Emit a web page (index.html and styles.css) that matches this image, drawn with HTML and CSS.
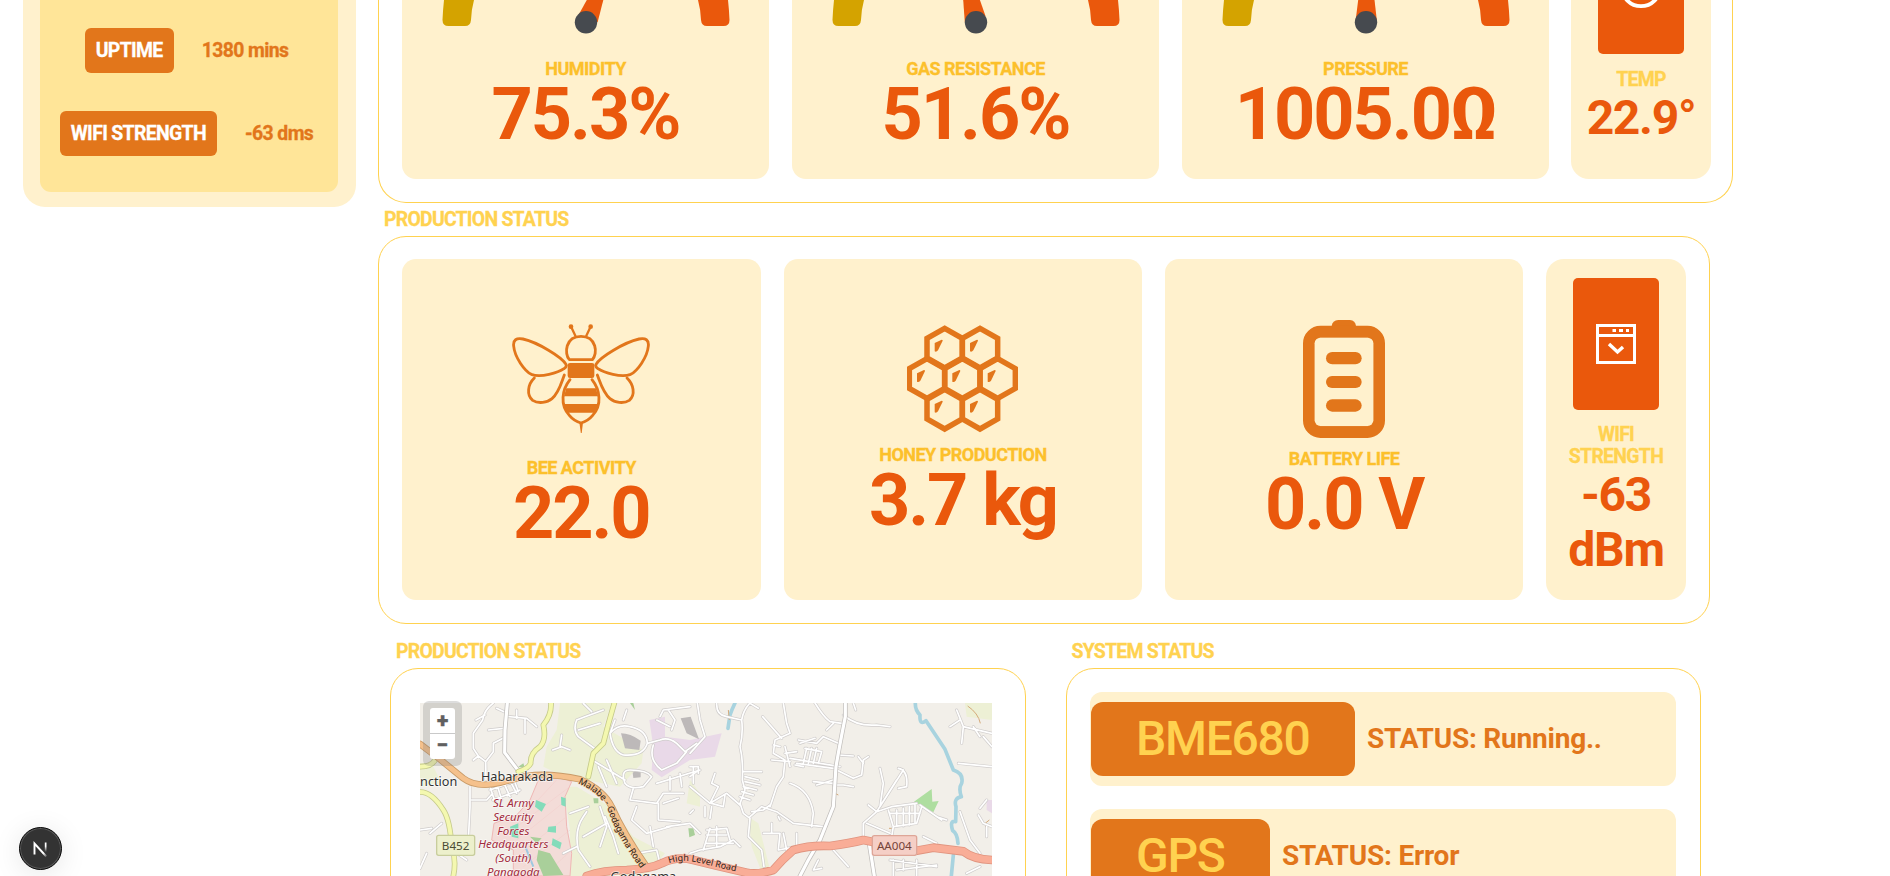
FILE: index.html
```html
<!DOCTYPE html>
<html lang="en">
<head>
<meta charset="utf-8">
<title>Hive Dashboard</title>
<link rel="stylesheet" href="styles.css">
</head>
<body>
<div class="page">
  <aside class="sidebar">
    <div class="sidebar-inner">
      <div class="stat"><span class="tag">UPTIME</span><span class="stat-value">1380 mins</span></div>
      <div class="stat"><span class="tag">WIFI STRENGTH</span><span class="stat-value">-63 dms</span></div>
    </div>
  </aside>

  <main class="content">
    <section class="panel panel-top">
      <div class="card gauge-card">
        <svg class="gauge" width="320" height="40" viewBox="-160 0 320 40">
          <path class="g-low" d="M-142 0Q-143 9-143.500 20Q-143.500 26-137.500 26H-121Q-115.500 26-115 20Q-114.500 9-112 0Z"/>
          <path class="g-high" d="M142 0Q143 9 143.500 20Q143.500 26 137.500 26H121Q115.500 26 115 20Q114.500 9 112 0Z"/>
          <path class="g-high" d="M.8 0H17.300L11.700 22H0L-7.500 15Z"/>
          <circle class="g-hub" cx="0" cy="22.300" r="11.200"/>
        </svg>
        <div class="label">HUMIDITY</div><div class="value">75.3%</div>
      </div>
      <div class="card gauge-card">
        <svg class="gauge" width="320" height="40" viewBox="-160 0 320 40">
          <path class="g-low" d="M-142 0Q-143 9-143.500 20Q-143.500 26-137.500 26H-121Q-115.500 26-115 20Q-114.500 9-112 0Z"/>
          <path class="g-high" d="M142 0Q143 9 143.500 20Q143.500 26 137.500 26H121Q115.500 26 115 20Q114.500 9 112 0Z"/>
          <path class="g-high" d="M-12.800 0H3.900L9.500 16L0 22H-11.200Z"/>
          <circle class="g-hub" cx="0" cy="22.300" r="11.200"/>
        </svg>
        <div class="label">GAS RESISTANCE</div><div class="value">51.6%</div>
      </div>
      <div class="card gauge-card">
        <svg class="gauge" width="320" height="40" viewBox="-160 0 320 40">
          <path class="g-low" d="M-142 0Q-143 9-143.500 20Q-143.500 26-137.500 26H-121Q-115.500 26-115 20Q-114.500 9-112 0Z"/>
          <path class="g-high" d="M142 0Q143 9 143.500 20Q143.500 26 137.500 26H121Q115.500 26 115 20Q114.500 9 112 0Z"/>
          <path class="g-high" d="M-7.800 0H8.500L10.800 20H-10.300Z"/>
          <circle class="g-hub" cx="0" cy="22.300" r="11.200"/>
        </svg>
        <div class="label">PRESSURE</div><div class="value">1005.0Ω</div>
      </div>
      <div class="card side-card side-top">
        <div class="icon-box icon-box-top">
          <svg width="86" height="20" viewBox="0 0 86 20"><circle cx="43" cy="-13" r="19.200" fill="none" stroke="#fff" stroke-width="3.800"/></svg>
        </div>
        <div class="side-label">TEMP</div><div class="side-value">22.9°</div>
      </div>
    </section>

    <h2 class="title">PRODUCTION STATUS</h2>
    <section class="panel panel-mid">
      <div class="card bee">
        <svg width="138" height="111" viewBox="98 70 414 333" fill="none" stroke="#e2761b" stroke-width="8.500" stroke-linecap="round">
          <circle cx="275" cy="81" r="7" fill="#e2761b" stroke="none"/><circle cx="334" cy="81" r="7" fill="#e2761b" stroke="none"/>
          <path d="M276 83L288 108M333 83L321 108" stroke-width="7"/>
          <path d="M270 180C254 162 258 110 305 110S356 162 339 180Z" stroke-linejoin="round"/>
          <rect x="265" y="190" width="80" height="45" rx="7" fill="#e2761b" stroke="none"/>
          <path d="M260 194C248 172 175 128 131 118C111 114 101 121 103 139C106 173 136 214 156 224C184 235 237 219 254 207Q263 202 260 194Z"/>
          <path d="M350 194C362 172 435 128 479 118C499 114 509 121 507 139C504 173 474 214 454 224C426 235 373 219 356 207Q347 202 350 194Z"/>
          <path d="M165 235C145 254 141 286 160 302C177 313 204 309 218 297C239 279 245 252 255 226M443 235C463 254 469 286 450 302C433 313 406 309 392 297C371 279 364 252 354 226"/>
          <path d="M272 240C248 270 241 315 270 347C279 358 291 366 305 370C319 366 331 358 340 347C369 315 362 270 338 240"/>
          <path d="M261 266H350L356 290H254ZM254 313H356L346 339H264Z" fill="#e2761b" stroke="none"/>
          <path d="M300 368L304.500 400H307L311 368Z" fill="#e2761b" stroke="none"/>
        </svg>
        <div class="label">BEE ACTIVITY</div><div class="value">22.0</div>
      </div>
      <div class="card honey">
        <svg width="111" height="109" viewBox="141 75 333 327">
          <defs>
            <g id="cell"><path d="M0-53L53-23V36L0 66L-53 36V-23Z" fill="none" stroke="#e2761b" stroke-width="16.500"/><path d="M-30-9L-9-19Q-6-19-6-16L-20 13Q-25 19-30 16Z" fill="#e2761b"/></g>
          </defs>
          <use href="#cell" x="254" y="138"/><use href="#cell" x="360" y="138"/>
          <use href="#cell" x="201" y="229"/><use href="#cell" x="307" y="229"/><use href="#cell" x="413" y="229"/>
          <use href="#cell" x="254" y="321"/><use href="#cell" x="360" y="321"/>
        </svg>
        <div class="label">HONEY PRODUCTION</div><div class="value">3.7 kg</div>
      </div>
      <div class="card battery">
        <svg width="82" height="118" viewBox="189 60 246 354" fill="#e2761b">
          <path d="M275 80V78Q277 62 295 60H330Q346 62 348 78V80Z"/>
          <rect x="206.500" y="95" width="211" height="301.500" rx="35" fill="none" stroke="#e2761b" stroke-width="35"/>
          <path d="M223 112H401V380H223Z"/><rect x="224" y="113" width="176" height="265" rx="17" fill="#fff1cd"/>
          <rect x="258" y="156" width="107" height="37" rx="18.500"/><rect x="258" y="228" width="107" height="36" rx="18"/><rect x="258" y="298" width="107" height="37" rx="18.500"/>
        </svg>
        <div class="label">BATTERY LIFE</div><div class="value">0.0 V</div>
      </div>
      <div class="card side-card side-mid">
        <div class="icon-box">
          <svg width="40" height="40" viewBox="0 0 40 40"><path d="M1.500 1.500H38.500V38.500H1.500ZM1.500 11.500H38.500" fill="none" stroke="#fff" stroke-width="3"/><path d="M16.500 5H20V8H16.500ZM23 5H27V8H23ZM30 5H33V8H30Z" fill="#fff"/><path d="M13 20L21.500 28L27 23" fill="none" stroke="#fff" stroke-width="3.400"/></svg>
        </div>
        <div class="side-label">WIFI STRENGTH</div><div class="side-value">-63 dBm</div>
      </div>
    </section>

    <div class="bottom">
      <div class="col">
        <h2 class="title">PRODUCTION STATUS</h2>
        <section class="panel panel-map">
          <div class="map">
            <svg class="map-svg" width="572" height="173" viewBox="150 249 1716 519">
              <defs>
                <g id="minor">
                  <path d="M370 249Q342 270 338 300L310 340V385L325 408L347 425L348 480M325 408L310 420M347 425L370 395V370L402 353M318 300L345 285M355 330L402 325M380 265L402 275M410 289L470 295L500 320M440 270V295M465 295V340M300 500V560L295 660M305 540H350L368 520M360 500L375 545M380 490L395 540M400 485L420 530M418 478L440 520M360 510L430 485M368 540L450 510M432 480L445 515"/>
                  <path d="M548 390L575 380L600 390M570 380L575 345M620 300L645 290L700 270M620 300Q608 330 625 350L680 390M625 330L690 310M640 250L665 275M735 300L720 340M720 340Q745 310 780 320Q830 330 832 370Q820 410 760 405Q728 395 720 340M832 370L870 360Q895 350 920 370L945 395L980 370M850 375Q835 420 875 450L920 430L950 395M780 450Q750 450 765 490Q780 510 820 500L845 470Q830 450 780 450M675 425L765 480M685 440L710 500M710 420L740 490M790 505L780 540L860 550L880 520H940M865 550V600L930 605M880 550L925 535M800 560L785 600L830 640L900 620M640 590Q612 630 625 690L660 740M640 590L650 575M690 560L710 620L690 680M705 590L730 650L745 700M710 610L640 650M860 490L990 450M900 470V510M930 460L935 500M970 440V490M870 290L880 270L960 260M895 270L915 300L905 330M860 300L900 320M800 700L860 690L870 730M840 620L850 680M890 620L960 610L990 640M180 640L215 610M150 630L185 625M170 700L150 745M260 700L290 720M600 580L655 560M580 700L620 680M770 270L760 300"/>
                  <g transform="translate(960 0)">
                    <path d="M22 249L30 300L45 350L0 400M80 249Q78 285 110 290L155 300M155 300Q160 270 180 249M155 300Q160 340 150 380Q160 420 157 480L165 510L150 550L160 580L180 595L175 650L215 690L222 740M180 250L205 265M280 249L290 310L300 340L255 360L250 400L285 420L280 470L260 500L240 560M218 290L275 355M285 380L300 440M270 380L250 375M245 420L300 425M285 400L320 395M375 249Q400 290 420 305L455 310M430 310L410 330M325 360L380 370L400 350L445 370M330 370L375 355M350 385L340 430M365 385L355 430M380 385L370 430M395 395L385 430M345 385L395 395M320 430L430 445M315 435L340 440M300 415L450 440M370 485L430 490M380 495L430 480M440 450L490 475L515 465L520 420L535 410M505 410L520 430M445 405L490 408M460 285Q500 320 560 315L600 320M490 249L497 270M430 495H460L490 500M300 490Q360 510 370 580L365 620M160 455H215M165 470L205 480M165 485L210 495M160 500L200 510M155 515L190 525M150 530L180 540M180 590L215 560L260 575L310 610L400 620M185 575L220 570L240 555M265 590L270 600M0 440H25V460M0 470L20 455M0 500L60 550L110 520L150 555M75 460L65 490L85 500L60 550M65 550L100 560L105 525M45 560V590M65 560L60 595M10 570L0 580M50 630L110 625L120 660M50 645L110 645M60 625L40 690M80 620V680M30 690L90 680L130 660L150 680M0 700L30 690M50 670H130M220 640H270L265 690M245 610V640M265 690L320 680V640M280 640L290 690M570 445L580 490L570 560M625 445Q655 450 650 500L625 505M570 560L640 450M560 575L620 480M535 555L560 575L520 610V650M560 575L605 560L680 550M530 610L600 640M595 570L610 620L680 610L695 560M600 580H690M620 570V615M640 565V618M658 560V615M675 555V610M690 555L755 600M740 590L770 600M610 620L600 680M800 270L820 320L815 370M820 320L906 340M810 300L780 320M850 320L870 350M880 350L906 380M805 430L906 440M810 575L840 660L870 700M870 565L890 540M865 585L880 610L906 620M890 620V650M600 720L740 740M620 750L740 735M610 720V768M680 720V768M640 720V750M700 650L740 670M430 690L475 740M385 720L370 750L395 745M830 760L870 740"/>
                  </g>
                </g>
                <g id="mid">
                  <path d="M412 249L405 330L404 398L445 452"/>
                  <path d="M1426 249V290Q1408 380 1398 440L1390 560L1350 660L1315 720L1290 768M1496 660L1513 768"/>
                </g>
                <g id="yellow"><path d="M543 249Q545 285 520 315Q530 360 510 380Q480 400 482 430Q475 445 445 455M733 249Q715 310 700 370L670 400L655 470M150 516Q185 515 220 570Q240 600 245 680Q260 720 250 768M150 440Q185 440 195 420"/></g>
                <path id="orange" d="M150 372L200 410L280 475Q320 505 390 488L470 468Q540 458 630 478Q700 510 725 560Q760 640 830 740"/>
                <path id="red" d="M650 768Q700 750 770 750Q840 748 880 728Q920 708 970 720Q1050 740 1130 758Q1160 765 1210 750Q1235 720 1270 690Q1320 675 1380 678Q1440 670 1480 660L1640 692L1690 683L1780 694Q1810 718 1866 720"/>
                <path id="text-malabe" d="M624 490Q695 520 716 575Q740 650 830 770"/>
                <path id="text-high" d="M897 730Q940 715 1000 731T1120 758"/>
              </defs>
              <path fill="#f2efe9" d="M150 249H1866V768H150Z"/>
              <path fill="#edf0d5" d="M570 249H725L700 320L820 390L815 430L750 500L650 480L600 478L520 440L530 380L560 330ZM620 500L720 560L790 650L885 700L830 768H600V630L580 500ZM150 430H185L215 490L150 500ZM960 480L990 520V560L950 550ZM1135 590L1165 610L1205 768H1180L1145 680ZM1785 249H1866V300L1790 290Z"/>
              <path fill="#f3dcd8" stroke="#efb7b5" stroke-width="3" d="M505 480Q570 465 605 485L585 530L590 620L605 700L600 768H430V690L365 660L372 610L440 585L480 540Z"/>
              <path stroke="#f2cdca" stroke-width="1.500" d="M485 560L560 480M440 620L600 500M440 660L590 540M450 700L590 590M460 740L600 630M520 768L605 690"/>
              <path fill="#e9d9e8" d="M838 300L885 290V350L960 360L1055 340L1035 410L960 420L875 472L845 450L850 380ZM1850 540H1866V580L1850 570Z"/>
              <path fill="#bdb9b9" d="M753 340Q780 340 812 362L808 390L765 385ZM932 295L962 290L987 358L950 340ZM788 458L800 450L812 455V472L790 474Z"/>
              <path fill="#83dcba" d="M498 540L528 552L515 575L495 560ZM573 530L587 535V560L574 555ZM535 620L558 618V638L532 635ZM548 655L575 668L570 688L545 675ZM420 620L445 610V655L425 650Z"/>
              <path fill="#a9cf9a" d="M505 690L540 700L580 765L520 768L500 720ZM955 625H970L975 645L958 652ZM780 249L795 270L790 249ZM480 650L515 655L500 670ZM670 535H685V550H672ZM445 440L460 430L465 445Z"/>
              <path fill="#aedea0" d="M1632 545L1685 507L1687 545L1706 543L1690 577Z"/>
              <path class="river" d="M1636 249Q1635 270 1650 285Q1648 318 1668 302L1725 388L1750 450Q1782 460 1775 490Q1765 505 1774 530Q1750 535 1758 560L1757 605Q1738 600 1748 632Q1762 640 1764 670M1750 705L1744 768M1095 249Q1085 270 1080 285L1074 325"/>
              <path d="M466 680L490 740" stroke="#9ec8e0" stroke-width="6"/>
              <path d="M1793 258Q1825 280 1831 310M1843 612L1858 600M1845 620H1855M1557 625H1572M1395 520L1405 525M1075 270L1078 300" fill="none" stroke="#d5aa7a" stroke-width="3"/>
              <use href="#minor" class="minor-case"/><use href="#minor" class="minor-fill"/>
              <use href="#mid" class="mid-case"/><use href="#mid" class="mid-fill"/>
              <use href="#yellow" class="yellow-case"/><use href="#yellow" class="yellow-fill"/>
              <use href="#orange" class="orange-case"/><use href="#orange" class="orange-fill"/>
              <use href="#red" class="red-case"/><use href="#red" class="red-fill"/>
              <rect x="200" y="646" width="114" height="60" rx="6" fill="#edf0cc" stroke="#c8cd9c" stroke-width="4"/>
              <text class="ref" x="257" y="689">B452</text>
              <rect x="1507" y="647" width="133" height="59" rx="6" fill="#f5cfc6" stroke="#dea698" stroke-width="4"/>
              <text class="ref ref-red" x="1573" y="690">AA004</text>
              <text class="place" x="441" y="483">Habarakada</text>
              <text class="place" x="262" y="499" text-anchor="end">nction</text>
              <text class="place" x="820" y="783">Godagama</text>
              <g class="army"><text x="430" y="562">SL Army</text><text x="430" y="603">Security</text><text x="430" y="644">Forces</text><text x="430" y="685">Headquarters</text><text x="430" y="726">(South)</text><text x="430" y="767">Panagoda</text></g>
              <text class="road"><textPath href="#text-malabe" textLength="325">Malabe - Godagama Road</textPath></text>
              <text class="road road-high"><textPath href="#text-high" textLength="205">High Level Road</textPath></text>
            </svg>
            <div class="zoom"><div class="zoom-btns"><span>+</span><span>−</span></div></div>
          </div>
        </section>
      </div>
      <div class="col">
        <h2 class="title">SYSTEM STATUS</h2>
        <section class="panel panel-system">
          <div class="row"><span class="device">BME680</span><span class="status">STATUS: Running..</span></div>
          <div class="row"><span class="device">GPS</span><span class="status">STATUS: Error</span></div>
        </section>
      </div>
    </div>
  </main>

  <div class="badge">
    <svg width="16" height="18" viewBox="0 0 16 18"><defs><linearGradient id="fade" x1="0" y1="0" x2="0" y2="1"><stop offset=".4" stop-color="#fff"/><stop offset="1" stop-color="#fff" stop-opacity="0"/></linearGradient><linearGradient id="tail" x1="0" y1="0" x2="1" y2="1"><stop offset=".75" stop-color="#fff"/><stop offset="1" stop-color="#fff" stop-opacity=".2"/></linearGradient></defs><path d="M1.500 14.500V3.500L13.300 16.500" fill="none" stroke="url(#tail)" stroke-width="1.900"/><path d="M11.800 2.500H13.500V12H11.800Z" fill="url(#fade)"/></svg>
  </div>
</div>
</body>
</html>
```
FILE: styles.css
```css
* { box-sizing: border-box; }
body { margin: 0; background: #fff; font-family: Roboto, "Liberation Sans", sans-serif; font-weight: 700; overflow: hidden; }
svg { display: block; flex: none; }
.page { display: flex; align-items: flex-start; gap: 22px; height: 876px; padding-left: 23px; overflow: hidden; position: relative; }

.sidebar { width: 333px; height: 207px; padding: 0 18px 15px 17px; background: #fff1cd; border-radius: 0 0 22px 22px; flex: none; }
.sidebar-inner { height: 192px; padding-top: 28px; background: #ffe598; border-radius: 0 0 11px 11px; display: flex; flex-direction: column; gap: 38px; }
.stat { display: flex; justify-content: center; align-items: center; gap: 28px; font-size: 19.400px; color: #e2761b; padding-right: 5px; }
.stat + .stat .stat-value { padding-bottom: 1px; }
.tag { height: 45px; line-height: 46px; padding: 0 11px; border-radius: 6px; background: #e2761b; color: #fff; letter-spacing: -0.650px; }
.stat-value { letter-spacing: -0.600px; }
.tag, .stat-value, .title, .label, .side-label { -webkit-text-stroke: 0.3px currentColor; }

.content { width: 1355px; flex: none; }
.panel { border: 1px solid #ffd250; border-radius: 28px; display: flex; }
.panel-top { height: 203px; border-top: 0; border-radius: 0 0 28px 28px; padding: 0 20px 23px 23px; gap: 23px; }
.card { background: #fff1cd; border-radius: 14px; display: flex; flex-direction: column; align-items: center; text-align: center; }
.gauge-card { width: 367px; height: 179px; border-radius: 0 0 14px 14px; flex: none; }
.g-low { fill: #d4a300; } .g-high { fill: #ea580c; } .g-hub { fill: #464a4f; }
.gauge { margin-bottom: 19px; }
.label { font-size: 18px; line-height: 20px; letter-spacing: -0.520px; color: #fcc02b; white-space: nowrap; }
.value { font-size: 72px; line-height: 72px; letter-spacing: -2.050px; color: #ea580c; white-space: nowrap; }
.side-card { width: 140px; border-radius: 18px; flex: none; }
.side-top { height: 179px; border-radius: 0 0 18px 18px; margin-left: -1px; }
.icon-box { width: 86px; height: 132px; background: #ea580c; border-radius: 5px; display: flex; align-items: center; justify-content: center; }
.icon-box-top { height: 54px; border-radius: 0 0 5px 5px; align-items: flex-start; margin-bottom: 15px; }
.side-label { font-size: 19.400px; line-height: 22px; letter-spacing: -0.700px; color: #ffd250; }
.side-value { font-size: 48px; line-height: 55px; letter-spacing: -1.300px; color: #ea580c; margin-top: -1px; }
.side-top .side-value { line-height: 55px; }

.title { margin: 0; padding-left: 6px; font-size: 19.400px; line-height: 23px; height: 33px; padding-top: 5px; color: #ffd250; letter-spacing: -0.750px; font-weight: 700; }
.panel-mid { width: 1332px; height: 388px; padding: 22px 0 22px 23px; gap: 23px; }
.panel-mid .card { height: 341px; flex: none; }
.panel-mid .card:not(.side-card) { width: 358.500px; }
.bee { padding-top: 64px; } .bee svg { margin-bottom: 24px; }
.honey { padding-top: 66px; margin-left: 0.200px; } .honey svg { margin-bottom: 11px; }
.battery { padding-top: 61px; margin-left: -0.300px; } .battery svg { margin-bottom: 11px; }
.side-mid { padding: 19px 16px 0; margin-left: -0.400px; }
.side-mid .icon-box { margin-bottom: 14px; flex: none; }

.bottom { display: flex; gap: 39.500px; padding: 12px 0 0 12px; }
.col { width: 636px; flex: none; }
.col + .col { width: 635.500px; }
.bottom .title { height: 32px; padding-top: 4px; }
.panel-map { height: 500px; padding: 34px 0 0 29px; }
.map { position: relative; width: 572px; height: 440px; background: #f2efe9; }
.map-svg { font-family: "Noto Sans", sans-serif; font-weight: 400; letter-spacing: 0; }
.map-svg use, .river { fill: none; stroke-linejoin: round; stroke-linecap: round; }
.river { stroke: #a8d3df; stroke-width: 11px; }
.minor-case { stroke: #cfcccb; stroke-width: 9px; } .minor-fill { stroke: #fff; stroke-width: 5px; }
.mid-case { stroke: #c1bebb; stroke-width: 14px; } .mid-fill { stroke: #fff; stroke-width: 9.500px; }
.yellow-case { stroke: #c5ca8b; stroke-width: 17px; } .yellow-fill { stroke: #f4f8b0; stroke-width: 12px; }
.orange-case { stroke: #c99b68; stroke-width: 20px; } .orange-fill { stroke: #f5c18c; stroke-width: 15px; }
.red-case { stroke: #e0937e; stroke-width: 26px; } .red-fill { stroke: #f9ad97; stroke-width: 21px; }
.ref { font-size: 35px; text-anchor: middle; fill: #4c4d36; }
.ref-red { fill: #75443b; }
.place { font-size: 38px; text-anchor: middle; fill: #333; stroke: #fff; stroke-opacity: .65; stroke-width: 5px; paint-order: stroke; }
.place[text-anchor="end"] { text-anchor: end; }
.army { font-size: 34.500px; font-style: italic; text-anchor: middle; fill: #a22b3d; stroke: #fff; stroke-opacity: .6; stroke-width: 4px; paint-order: stroke; }
.road { font-size: 27px; fill: #292018; stroke: #f5c18c; stroke-width: 3px; paint-order: stroke; }
.road-high { stroke: #f9ad97; }
.zoom { position: absolute; left: 3px; top: -2px; width: 39px; height: 65px; padding: 7px; background: rgba(120,120,120,.25); border-radius: 6px; }
.zoom-btns { width: 25px; border-radius: 3px; overflow: hidden; background: #fff; color: #606060; }
.zoom-btns span { display: block; height: 25px; line-height: 24px; text-align: center; font-size: 21px; font-weight: 900; -webkit-text-stroke: .4px #606060; }
.zoom-btns span + span { border-top: 1px solid #c9c9c9; height: 26px; line-height: 23px; }

.panel-system { height: 500px; padding: 23px 24px 0 23px; flex-direction: column; gap: 23px; }
.row { height: 94px; background: #fff1cd; border-radius: 12px; display: flex; align-items: center; gap: 12px; padding-left: 1px; flex: none; }
.device { height: 74px; line-height: 74px; padding: 0 45.500px; background: #e2761b; border-radius: 12px; color: #ffd250; font-size: 48px; font-weight: 500; letter-spacing: -1.300px; }
.status { font-size: 28px; color: #e2761b; letter-spacing: -0.220px; font-weight: 700; padding-bottom: 2px; }

.badge { position: absolute; left: 19px; top: 827px; width: 43px; height: 43px; border-radius: 50%; background: #333; border: 1px solid #0a0a0a; box-shadow: inset 0 0 0 1px #5a5a5a, 0 4px 28px rgba(0,0,0,.1); display: flex; align-items: center; justify-content: center; }
```
